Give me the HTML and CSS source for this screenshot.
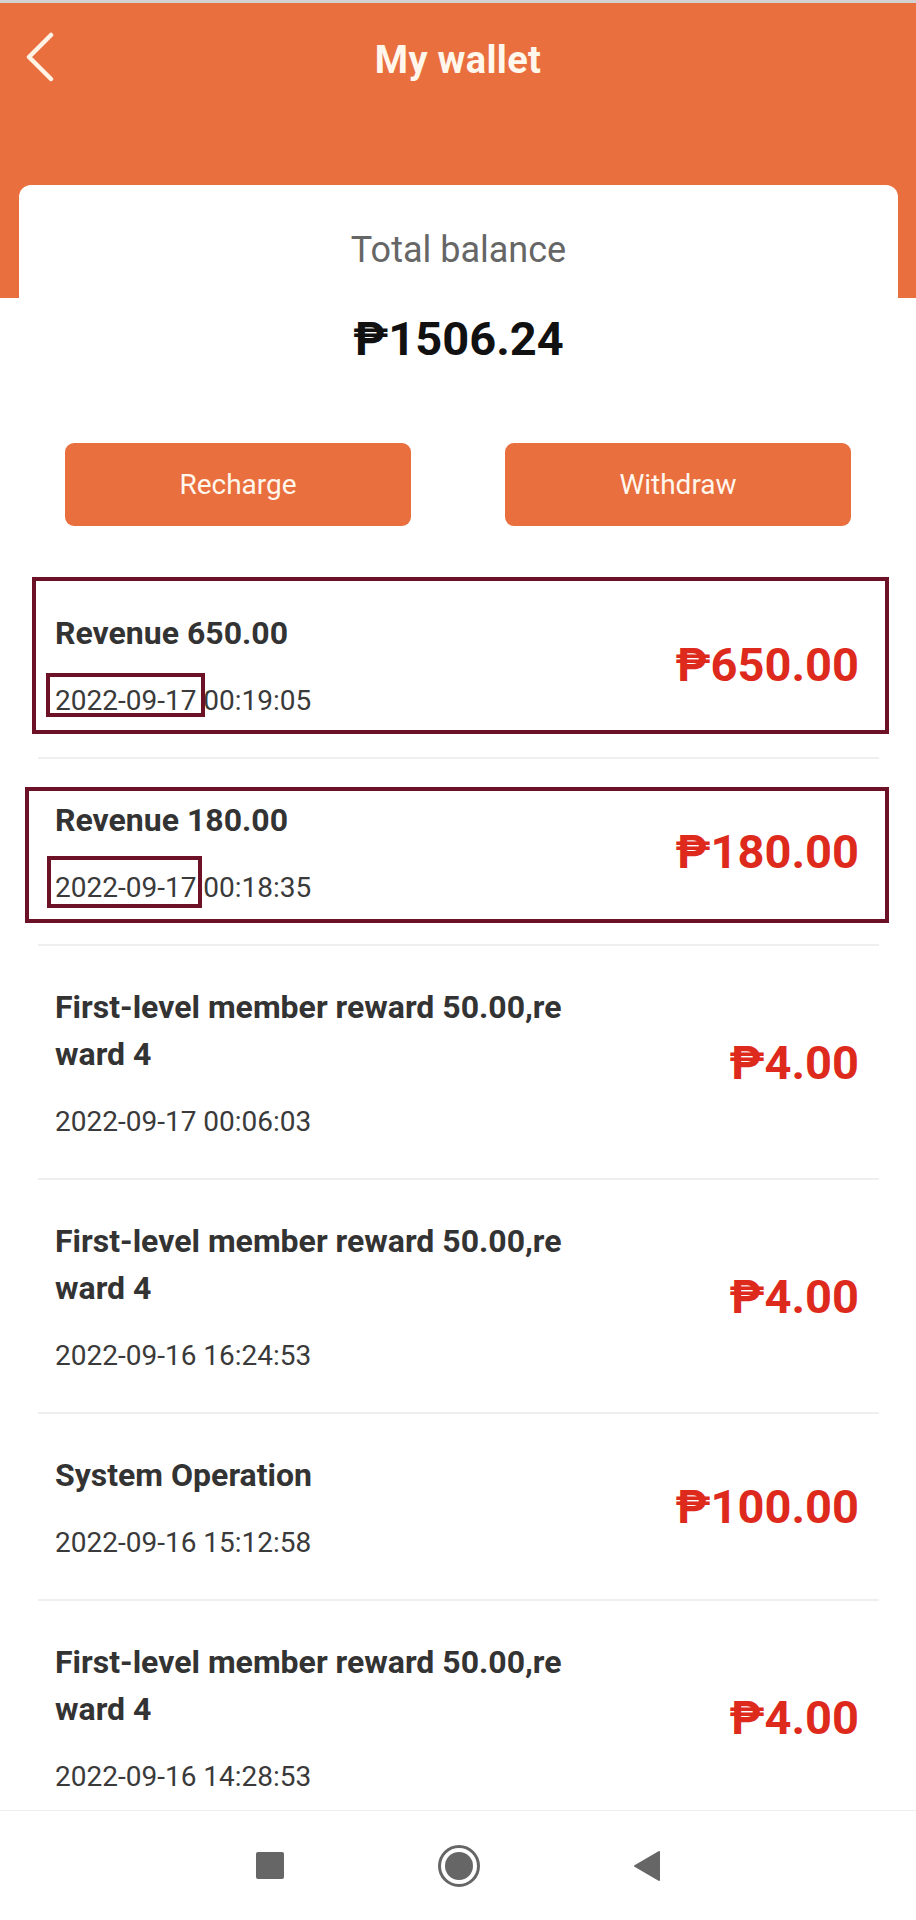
FILE: index.html
```html
<!DOCTYPE html>
<html lang="en">
<head>
    <meta charset="UTF-8">
    <meta name="viewport" content="width=device-width, initial-scale=1.0">
    <title>My wallet</title>
    <link rel="stylesheet" href="styles.css">
</head>
<body>
    <div class="screen">
        <div class="status-line"></div>
        <header class="top">
            <div class="titlebar">
                <a href="#" class="back">
                    <svg width="30" height="50" viewBox="0 0 30 50">
                        <polyline points="26,3 4,25 26,47" fill="none" stroke="#fff3e6" stroke-width="4.5" stroke-linecap="round" stroke-linejoin="round"/>
                    </svg>
                </a>
                <h1>My wallet</h1>
                <span></span>
            </div>
        </header>

        <section class="card">
            <div class="label">Total balance</div>
            <div class="balance">₱1506.24</div>
            <div class="actions">
                <button>Recharge</button>
                <button>Withdraw</button>
            </div>
        </section>

        <ul class="records">
            <li class="record">
                <div class="info">
                    <div class="name">Revenue 650.00</div>
                    <div class="time">2022-09-17 00:19:05</div>
                </div>
                <div class="amount">₱650.00</div>
                <span class="mark mark-row1"></span>
                <span class="mark mark-date1"></span>
            </li>
            <li class="record">
                <div class="info">
                    <div class="name">Revenue 180.00</div>
                    <div class="time">2022-09-17 00:18:35</div>
                </div>
                <div class="amount">₱180.00</div>
                <span class="mark mark-row2"></span>
                <span class="mark mark-date2"></span>
            </li>
            <li class="record">
                <div class="info">
                    <div class="name">First-level member reward 50.00,re<br>ward 4</div>
                    <div class="time">2022-09-17 00:06:03</div>
                </div>
                <div class="amount">₱4.00</div>
            </li>
            <li class="record">
                <div class="info">
                    <div class="name">First-level member reward 50.00,re<br>ward 4</div>
                    <div class="time">2022-09-16 16:24:53</div>
                </div>
                <div class="amount">₱4.00</div>
            </li>
            <li class="record">
                <div class="info">
                    <div class="name">System Operation</div>
                    <div class="time">2022-09-16 15:12:58</div>
                </div>
                <div class="amount">₱100.00</div>
            </li>
            <li class="record">
                <div class="info">
                    <div class="name">First-level member reward 50.00,re<br>ward 4</div>
                    <div class="time">2022-09-16 14:28:53</div>
                </div>
                <div class="amount">₱4.00</div>
            </li>
        </ul>

        <nav class="navbar">
            <svg width="28" height="27" viewBox="0 0 28 27">
                <rect x="0" y="0" width="28" height="27" rx="2" fill="#666"/>
            </svg>
            <svg width="42" height="42" viewBox="0 0 42 42">
                <circle cx="21" cy="21" r="19.5" fill="none" stroke="#666" stroke-width="3"/>
                <circle cx="21" cy="21" r="14" fill="#666"/>
            </svg>
            <svg width="26" height="30" viewBox="0 0 26 30">
                <path d="M25 1 L25 29 L1 15 Z" fill="#666" stroke="#666" stroke-width="2" stroke-linejoin="round"/>
            </svg>
        </nav>
    </div>
</body>
</html>
```

FILE: styles.css
```css
/* Global Styles */
* {
    box-sizing: border-box;
}

body {
    margin: 0;
    padding: 0;
    font-family: 'Roboto', 'Liberation Sans', sans-serif;
    background: #fff;
    color: #333;
}

.screen {
    height: 1920px;
    display: flex;
    flex-direction: column;
    overflow: hidden;
}

.status-line {
    height: 3px;
    background: #d2d2d2;
}

/* Header */
.top {
    height: 295px;
    background: #ea6f3e;
}

.titlebar {
    display: grid;
    grid-template-columns: 80px 1fr 80px;
    align-items: center;
    height: 114px;
}

.back {
    display: block;
    margin-left: 25px;
    margin-top: -6px;
    line-height: 0;
}

.titlebar h1 {
    margin: 0;
    text-align: center;
    font-size: 38px;
    font-weight: 700;
    letter-spacing: 0.3px;
    color: #fff6ec;
}

/* Balance card */
.card {
    margin: -113px 18px 0 19px;
    padding: 43px 0 46px;
    background: #fff;
    border-radius: 12px 12px 0 0;
    text-align: center;
}

.label {
    font-size: 36px;
    line-height: 44px;
    color: #666;
}

.balance {
    margin-top: 39px;
    font-size: 47px;
    line-height: 56px;
    font-weight: 700;
    color: #111;
}

.actions {
    display: flex;
    justify-content: space-between;
    margin-top: 76px;
    padding: 0 47px 0 46px;
}

.actions button {
    width: 346px;
    height: 83px;
    border: none;
    border-radius: 9px;
    background: #ea6f3e;
    color: #fff6ec;
    font-family: inherit;
    font-size: 28px;
    cursor: pointer;
}

/* Records */
.records {
    flex: 1;
    list-style: none;
    margin: 0;
    padding: 0;
    overflow: hidden;
}

.record {
    position: relative;
    display: flex;
    justify-content: space-between;
    align-items: center;
    margin: 0 37px 0 38px;
    padding: 38px 20px 38px 17px;
    border-bottom: 2px solid #efefef;
}

.name {
    font-size: 32px;
    line-height: 47px;
    font-weight: 700;
    color: #333;
}

.time {
    margin-top: 26px;
    font-size: 28px;
    line-height: 36px;
    color: #3a3a3a;
}

.amount {
    font-size: 47px;
    font-weight: 700;
    color: #dd2a1c;
}

/* highlight boxes drawn over the rows */
.mark {
    position: absolute;
    border: 4px solid #6d1126;
}

.mark-row1 {
    left: -6px;
    top: 5px;
    width: 857px;
    height: 157px;
}

.mark-date1 {
    left: 8px;
    top: 101px;
    width: 159px;
    height: 44px;
}

.mark-row2 {
    left: -13px;
    top: 28px;
    width: 864px;
    height: 136px;
}

.mark-date2 {
    left: 9px;
    top: 97px;
    width: 155px;
    height: 52px;
}

/* System nav */
.navbar {
    flex: 0 0 110px;
    display: flex;
    justify-content: center;
    align-items: center;
    gap: 154px;
    border-top: 1px solid #eeeeee;
    background: #fff;
}
```
